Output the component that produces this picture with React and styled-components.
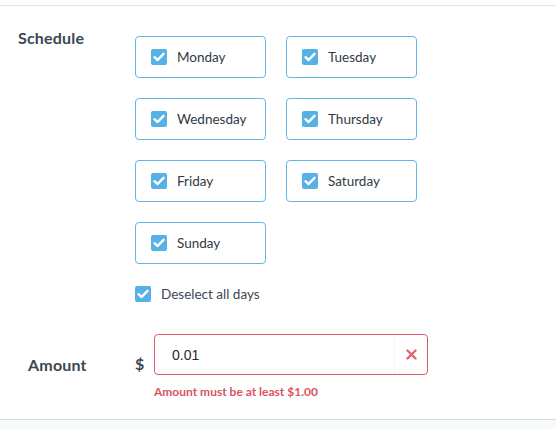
import * as React from "react"
import styled, { createGlobalStyle } from "styled-components"

const GlobalStyle = createGlobalStyle`
  html, body {
    margin: 0;
    padding: 0;
    background: #ffffff;
  }
  body {
    font-family: "Lato", "Open Sans", sans-serif;
    color: #34404c;
  }
`

const DAYS = ["Monday", "Tuesday", "Wednesday", "Thursday", "Friday", "Saturday", "Sunday"]

const Check = () => (
  <CheckBox>
    <svg width="12" height="10" viewBox="0 0 12 10">
      <path d="M1.5 5.2 L4.6 8 L10.5 1.8" fill="none" stroke="#fff" strokeWidth="2.4" strokeLinecap="round" strokeLinejoin="round" />
    </svg>
  </CheckBox>
)

const App = () => {
  return (
    <>
      <GlobalStyle />
      <Page>
        <Form>
          <Row>
            <Label $indent={18} $top={0}>Schedule</Label>
            <Field>
              <DayGrid>
                {DAYS.map((day) => (
                  <DayBox key={day}>
                    <Check />
                    <DayName>{day}</DayName>
                  </DayBox>
                ))}
              </DayGrid>
              <Deselect>
                <Check />
                <span>Deselect all days</span>
              </Deselect>
            </Field>
          </Row>
          <AmountRow>
            <Label $indent={28} $top={21}>Amount</Label>
            <Currency>$</Currency>
            <InputCol>
              <InputWrap>
                <Input defaultValue="0.01" />
                <Clear>
                  <svg width="11" height="11" viewBox="0 0 11 11">
                    <path d="M1.5 1.5 L9.5 9.5 M9.5 1.5 L1.5 9.5" stroke="#e0646a" strokeWidth="2.4" strokeLinecap="round" />
                  </svg>
                </Clear>
              </InputWrap>
              <Error>Amount must be at least $1.00</Error>
            </InputCol>
          </AmountRow>
        </Form>
        <Footer />
      </Page>
    </>
  )
}

//Layout
const Page = styled.div`
  width: 556px;
  height: 429px;
  display: flex;
  flex-direction: column;
  overflow: hidden;
`

const Form = styled.div`
  margin-top: 5px;
  border-top: 1px solid #dde4ea;
  padding-top: 22px;
  height: 390px;
  box-sizing: border-box;
`

const Row = styled.div`
  display: flex;
`

const Label = styled.div`
  width: 135px;
  box-sizing: border-box;
  padding-left: ${(props) => props.$indent}px;
  padding-top: ${(props) => props.$top}px;
  font-size: 16px;
  font-weight: 700;
  line-height: 20px;
  letter-spacing: 0.2px;
  color: #3b4754;
`

const Field = styled.div`
  padding-top: 8px;
`

const DayGrid = styled.div`
  display: grid;
  grid-template-columns: 131px 131px;
  grid-auto-rows: 42px;
  column-gap: 20px;
  row-gap: 20px;
`

const DayBox = styled.label`
  display: flex;
  align-items: center;
  gap: 10px;
  padding-left: 15px;
  border: 1px solid #62b6e7;
  border-radius: 4px;
  box-sizing: border-box;
`

const CheckBox = styled.span`
  width: 16px;
  height: 16px;
  border-radius: 2px;
  background: #56b1e7;
  display: flex;
  align-items: center;
  justify-content: center;
  flex-shrink: 0;
`

const DayName = styled.span`
  font-size: 13.5px;
  color: #2f3a45;
`

const Deselect = styled.label`
  display: flex;
  align-items: center;
  gap: 10px;
  margin-top: 22px;
  font-size: 13.5px;
  color: #3b4754;
`

const AmountRow = styled.div`
  display: flex;
  margin-top: 32px;
`

const Currency = styled.div`
  width: 19px;
  padding-top: 20px;
  font-size: 16px;
  font-weight: 700;
  line-height: 20px;
  color: #3b4754;
`

const InputCol = styled.div`
  display: flex;
  flex-direction: column;
`

const InputWrap = styled.div`
  width: 274px;
  height: 41px;
  border: 1px solid #dc5c66;
  border-radius: 4px;
  box-sizing: border-box;
  display: flex;
  align-items: center;
`

const Input = styled.input`
  flex: 1;
  min-width: 0;
  border: none;
  outline: none;
  height: 100%;
  padding: 0 0 0 17px;
  background: transparent;
  font-family: "Liberation Sans", Arial, sans-serif;
  font-size: 14px;
  color: #222b33;
  border-right: 1px solid #f7f7f9;
`

const Clear = styled.span`
  width: 32px;
  display: flex;
  align-items: center;
  justify-content: center;
`

const Error = styled.div`
  margin-top: 9px;
  font-size: 12px;
  font-weight: 700;
  color: #d9535f;
`

const Footer = styled.div`
  flex: 1;
  margin-top: 24px;
  border-top: 1px solid #d3dfe6;
  background: #f7f9fa;
`

export default App
